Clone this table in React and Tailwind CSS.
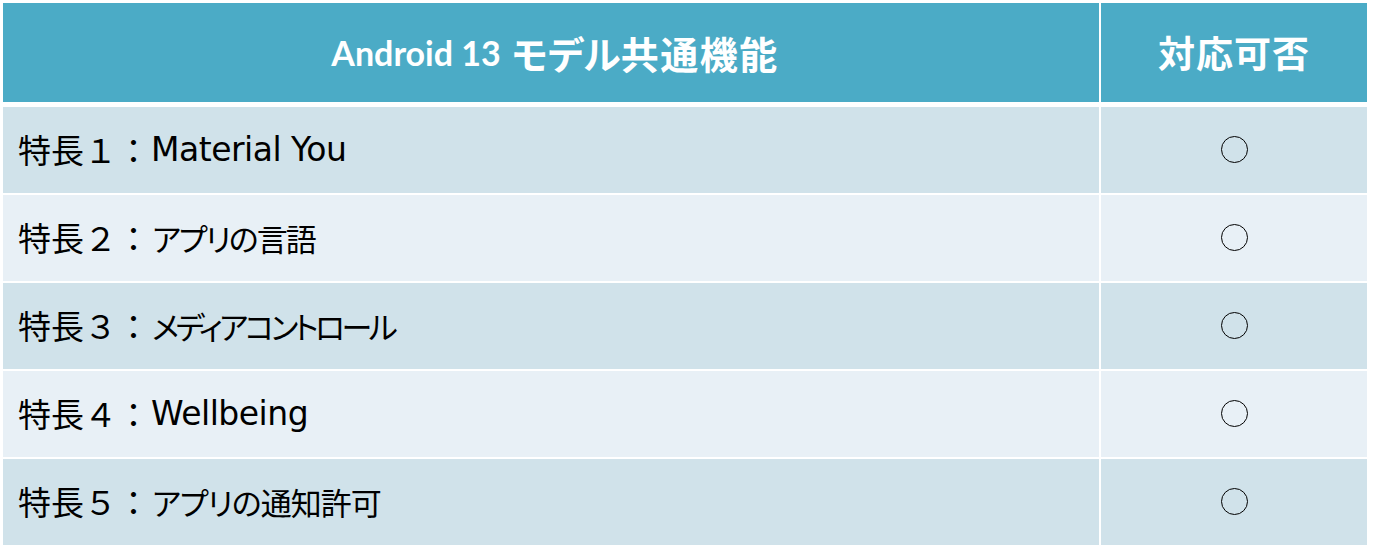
import React from "react";

const rows = [
  { no: "１", name: "Material You", latin: true },
  { no: "２", name: "アプリの言語", track: "tracking-[-2px]" },
  { no: "３", name: "メディアコントロール", track: "tracking-[-3.5px]" },
  { no: "４", name: "Wellbeing", latin: true },
  { no: "５", name: "アプリの通知許可", track: "tracking-[-1px]" },
];

export default function App() {
  return (
    <div className="w-[1373px] h-[548px] bg-white pt-[3px] pl-[3px] font-['DejaVu_Sans','Noto_Sans_CJK_JP',sans-serif]">
      {/* header */}
      <div className="grid grid-cols-[1096px_266px] gap-x-[2px] h-[99px]">
        <div className="bg-[#4BABC6] flex items-center justify-center text-white font-bold pl-[8px]">
          <span className="font-['Lato','Noto_Sans_CJK_JP',sans-serif] text-[34px] mr-[11px]">Android 13</span>
          <span className="font-['Noto_Sans_CJK_JP',sans-serif] text-[38px] [font-feature-settings:'palt']">モデル</span>
          <span className="font-['Noto_Sans_CJK_JP',sans-serif] text-[38px] tracking-[1.5px]">共通機能</span>
        </div>
        <div className="bg-[#4BABC6] flex items-center justify-center text-white font-bold font-['Noto_Sans_CJK_JP',sans-serif] text-[37px] tracking-[1px]">
          対応可否
        </div>
      </div>

      {/* body */}
      <div className="mt-[5px] flex flex-col gap-y-[2px]">
        {rows.map((r, i) => (
          <div key={i} className="grid grid-cols-[1096px_266px] gap-x-[2px] h-[86px]">
            <div className={`${i % 2 === 0 ? "bg-[#D0E2EA]" : "bg-[#E8F0F6]"} flex items-center pl-[15px] text-black text-[33px]`}>
              <span className="font-['Noto_Sans_CJK_JP',sans-serif]">特長{r.no}：</span>
              {r.latin ? (
                <span className="font-['DejaVu_Sans',sans-serif] ml-[1px] tracking-[-0.5px]">{r.name}</span>
              ) : (
                <span className={`font-['Noto_Sans_CJK_JP',sans-serif] text-[31px] [font-feature-settings:'palt'] ml-[2px] ${r.track}`}>{r.name}</span>
              )}
            </div>
            <div className={`${i % 2 === 0 ? "bg-[#D0E2EA]" : "bg-[#E8F0F6]"} flex items-center justify-center`}>
              <div className="w-[27px] h-[27px] rounded-full border border-black translate-y-[-1px]"></div>
            </div>
          </div>
        ))}
      </div>
    </div>
  );
}
